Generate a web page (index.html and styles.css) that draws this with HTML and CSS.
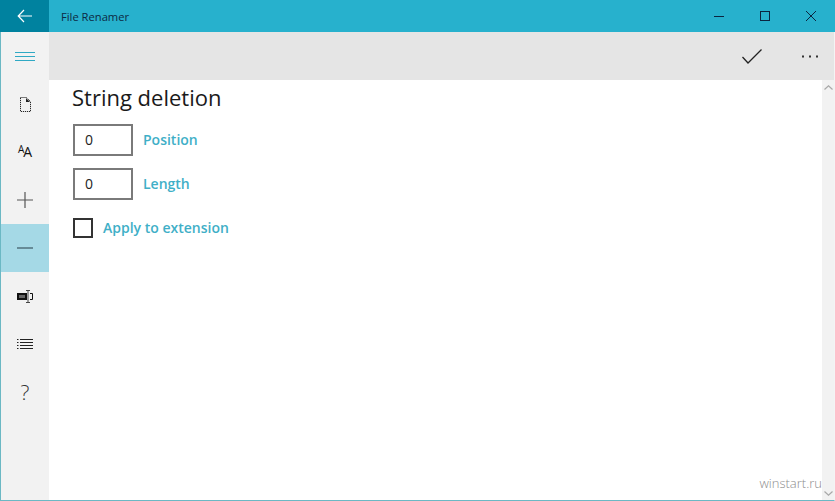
FILE: index.html
```
<!DOCTYPE html>
<html lang="en">
<head>
<meta charset="utf-8">
<title>File Renamer</title>
<link rel="stylesheet" href="styles.css">
</head>
<body>
<div class="window">
  <header class="titlebar">
    <div class="back">
      <svg width="16" height="14" viewBox="0 0 16 14"><path d="M7 1 1.2 7 7 13M1.2 7H15" fill="none" stroke="#fff" stroke-width="1.2"/></svg>
    </div>
    <div class="app-title">File Renamer</div>
    <div class="caption">
      <div class="cap-btn"><svg width="12" height="12" viewBox="0 0 12 12"><path d="M1 6.5H11" stroke="#0b2540" stroke-width="1"/></svg></div>
      <div class="cap-btn"><svg width="12" height="12" viewBox="0 0 12 12"><rect x="1.5" y="1.5" width="9" height="9" fill="none" stroke="#0b2540" stroke-width="1"/></svg></div>
      <div class="cap-btn"><svg width="12" height="12" viewBox="0 0 12 12"><path d="M1 1 11 11M11 1 1 11" stroke="#0b2540" stroke-width="1"/></svg></div>
    </div>
  </header>
  <div class="body">
    <nav class="sidebar">
      <div class="nav-item">
        <svg width="20" height="9" viewBox="0 0 20 9"><path d="M0 .5H20M0 4.5H20M0 8.5H20" stroke="#2fa9c4" stroke-width="1"/></svg>
      </div>
      <div class="nav-item">
        <svg width="11" height="15" viewBox="0 0 11 15"><path d="M.5 .5H6.5L10.5 4.5V14.5H.5Z" fill="none" stroke="#000" stroke-width="1" stroke-dasharray="1 1"/><path d="M6 1 10 5H6Z" fill="#222"/></svg>
      </div>
      <div class="nav-item">
        <span class="aa"><span class="aa-small">A</span><span class="aa-big">A</span></span>
      </div>
      <div class="nav-item">
        <svg width="16" height="16" viewBox="0 0 16 16"><path d="M0 8H16M8 0V16" stroke="#555" stroke-width="1.2"/></svg>
      </div>
      <div class="nav-item active">
        <svg width="16" height="2" viewBox="0 0 16 2"><path d="M0 1H16" stroke="#44606c" stroke-width="1.3"/></svg>
      </div>
      <div class="nav-item">
        <svg width="16" height="13" viewBox="0 0 16 13"><rect x="1" y="4" width="8" height="5" fill="#666" stroke="#111" stroke-width="2"/><path d="M9 .5H13M9 12.5H13" fill="none" stroke="#444"/><path d="M11 .5V12.5" stroke="#444"/><path d="M13 3.5H15.5V9.5H13" fill="none" stroke="#111"/></svg>
      </div>
      <div class="nav-item">
        <svg width="16" height="11" viewBox="0 0 16 11"><path d="M3 .5H16M3 3.5H16M3 6.5H16M3 9.5H16" stroke="#222"/><path d="M0 .5H1.5M0 3.5H1.5M0 6.5H1.5M0 9.5H1.5" stroke="#222"/></svg>
      </div>
      <div class="nav-item help">?</div>
    </nav>
    <main class="main">
      <div class="toolbar">
        <div class="tool-btn">
          <svg width="20" height="15" viewBox="0 0 20 15"><path d="M.5 8 6 14 19.5 .5" fill="none" stroke="#222" stroke-width="1.3"/></svg>
        </div>
        <div class="tool-btn">
          <svg width="16" height="3" viewBox="0 0 16 3"><path d="M0 1.5H2M7 1.5H9M14 1.5H16" stroke="#333" stroke-width="2"/></svg>
        </div>
      </div>
      <div class="content-row">
        <section class="content">
          <h1 class="heading">String deletion</h1>
          <div class="field">
            <div class="num-box">0</div>
            <span class="label">Position</span>
          </div>
          <div class="field">
            <div class="num-box">0</div>
            <span class="label">Length</span>
          </div>
          <div class="check-row">
            <div class="check"></div>
            <span class="label">Apply to extension</span>
          </div>
        </section>
        <aside class="scrollbar">
          <svg width="9" height="5" viewBox="0 0 9 5"><path d="M.5 4.5 4.5 .8 8.5 4.5" fill="none" stroke="#a8a8a8" stroke-width="1.2"/></svg>
          <svg width="9" height="5" viewBox="0 0 9 5"><path d="M.5 .5 4.5 4.2 8.5 .5" fill="none" stroke="#a8a8a8" stroke-width="1.2"/></svg>
        </aside>
      </div>
    </main>
  </div>
  <div class="watermark">winstart.ru</div>
</div>
</body>
</html>
```
FILE: styles.css
```
* { box-sizing: border-box; }
html, body { margin: 0; padding: 0; }
body { width: 835px; height: 501px; overflow: hidden; font-family: "Open Sans", "Noto Sans", sans-serif; background: #fff; }
.window { position: relative; width: 835px; height: 501px; display: flex; flex-direction: column; border-left: 1px solid #6bb8c4; border-right: 1px solid #f4f4f4; border-bottom: 1px solid #6bb8c4; }
.titlebar { height: 32px; flex: none; display: flex; align-items: center; background: #27b1cd; margin-left: -1px; margin-right: -1px; }
.back { width: 49px; height: 32px; background: #00829f; display: flex; align-items: center; justify-content: center; }
.app-title { margin-left: 12px; font-size: 11.2px; color: #0c2a44; flex: 1; }
.caption { display: flex; margin-right: 1px; }
.cap-btn { width: 46px; height: 32px; display: flex; align-items: center; justify-content: center; }
.body { flex: 1; display: flex; min-height: 0; }
.sidebar { width: 48px; flex: none; background: #f2f2f2; display: flex; flex-direction: column; }
.nav-item { height: 48px; flex: none; display: flex; align-items: center; justify-content: center; }
.nav-item.active { background: #a5d9e6; }
.aa { display: flex; align-items: flex-end; color: #111; line-height: 1; }
.aa-small { font-size: 10px; position: relative; top: -5px; }
.aa-big { font-size: 14px; margin-left: -1px; }
.help { font-size: 21px; font-weight: 300; color: #333; }
.main { flex: 1; display: flex; flex-direction: column; min-width: 0; }
.toolbar { height: 48px; flex: none; background: #e5e5e5; display: flex; justify-content: flex-end; gap: 10px; }
.tool-btn { width: 48px; height: 48px; display: flex; align-items: center; justify-content: center; }
.content-row { flex: 1; display: flex; min-height: 0; }
.content { flex: 1; padding-left: 24px; }
.heading { margin: 1px 0 11px -1px; font-size: 22px; font-weight: 400; line-height: 32px; color: #1a1a1a; }
.field { display: flex; align-items: center; gap: 10px; margin-bottom: 12px; }
.num-box { width: 60px; height: 32px; border: 2px solid #7a7a7a; padding-left: 10px; font-size: 14px; line-height: 27px; color: #222; background: #fff; }
.label { font-size: 14px; font-weight: 600; color: #3fafc7; position: relative; top: -1px; }
.check-row { display: flex; align-items: center; gap: 10px; margin-top: 18px; }
.check { width: 20px; height: 20px; border: 2px solid #333; background: #fff; }
.scrollbar { width: 12px; flex: none; background: #f2f2f2; display: flex; flex-direction: column; justify-content: space-between; align-items: center; padding: 5px 0 4px; }
.watermark { position: absolute; right: 12px; bottom: 8px; font-size: 13px; color: #8c8c8c; font-weight: 300; }
```
